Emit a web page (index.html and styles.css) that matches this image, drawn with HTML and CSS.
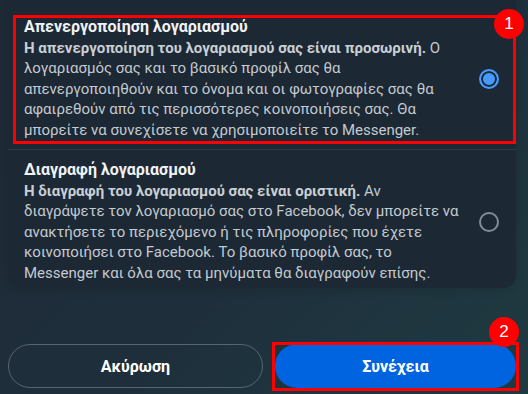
FILE: index.html
```html
<!DOCTYPE html>
<html lang="el">
<head>
  <meta charset="UTF-8">
  <title>Απενεργοποίηση ή διαγραφή</title>
  <link rel="stylesheet" href="styles.css">
</head>
<body>
  <div class="page">
    <div class="card">
      <div class="option selected">
        <div class="option-text">
          <div class="option-title">Απενεργοποίηση λογαριασμού</div>
          <div class="option-desc"><b>Η απενεργοποίηση του λογαριασμού σας είναι προσωρινή.</b> Ο λογαριασμός σας και το βασικό προφίλ σας θα απενεργοποιηθούν και το όνομα και οι φωτογραφίες σας θα αφαιρεθούν από τις περισσότερες κοινοποιήσεις σας. Θα μπορείτε να συνεχίσετε να χρησιμοποιείτε το Messenger.</div>
        </div>
        <span class="radio on"></span>
        <div class="mark mark-1"><span class="badge">1</span></div>
      </div>
      <div class="option">
        <div class="option-text">
          <div class="option-title">Διαγραφή λογαριασμού</div>
          <div class="option-desc"><b>Η διαγραφή του λογαριασμού σας είναι οριστική.</b> Αν διαγράψετε τον λογαριασμό σας στο Facebook, δεν μπορείτε να ανακτήσετε το περιεχόμενο ή τις πληροφορίες που έχετε κοινοποιήσει στο Facebook. Το βασικό προφίλ σας, το Messenger και όλα σας τα μηνύματα θα διαγραφούν επίσης.</div>
        </div>
        <span class="radio"></span>
      </div>
    </div>
    <div class="actions">
      <button class="btn btn-cancel">Ακύρωση</button>
      <div class="btn-wrap">
        <button class="btn btn-primary">Συνέχεια</button>
        <div class="mark mark-2"><span class="badge">2</span></div>
      </div>
    </div>
  </div>
</body>
</html>
```

FILE: styles.css
```css
html, body { margin: 0; height: 100%; }
body { font-family: Roboto, 'Noto Sans', Arial, sans-serif; background: linear-gradient(135deg, #1e2a36 0%, #1e2f3b 55%, #1f3b42 100%); color: #e4e6eb; overflow: hidden;}
.page { padding: 0 12px 0 8px; display: flex; flex-direction: column; height: 394px; box-sizing: border-box;}
.card { background: #1c2833; border-radius: 0 0 14px 14px; padding-top: 7px; box-shadow: 0 2px 10px rgba(0,0,0,0.12);}
.option { position: relative; display: flex; align-items: center; gap: 8px; padding: 10px 17px 9px 16px;}
.option + .option { border-top: 1px solid #2e3b47; padding-bottom: 5px;}
.option-text { flex: 1; max-width: 440px;}
.option-title { font-size: 16px; font-weight: 700; line-height: 20.5px; color: #f0f2f5;}
.option-desc { font-size: 15px; line-height: 20.5px; color: #c4cad1;}
.option-desc b { font-weight: 700; color: #c9cfd5;}
.radio { width: 16px; height: 16px; margin-left: auto; border-radius: 50%; border: 2px solid #7f8e9b; flex: none; box-sizing: content-box;}
.radio.on { border-color: #4599ff; background: #4599ff; box-shadow: inset 0 0 0 2px #1c2833;}
.mark { position: absolute; border: 3px solid #ff0000; pointer-events: none;}
.mark-1 { left: 5px; right: 0; top: 8px; bottom: 5px;}
.badge { position: absolute; width: 30px; height: 30px; border-radius: 50%; background: #ff0000; color: #fff; font-size: 17px; line-height: 30px; text-align: center; font-family: 'Liberation Sans', Arial, sans-serif;}
.mark-1 .badge { right: -11px; top: -9px;}
.actions { margin-top: auto; margin-bottom: 6px; display: flex; gap: 12px;}
.btn { font-family: inherit; font-size: 16px; font-weight: 700; color: #fff; height: 44px; border-radius: 22px; cursor: pointer;}
.btn-cancel { flex: 1; background: transparent; border: 1px solid #56656f;}
.btn-wrap { flex: 1; position: relative; display: flex;}
.btn-primary { flex: 1; background: #0064e0; border: none;}
.mark-2 { left: -3px; right: -3px; top: -2px; bottom: -3px;}
.mark-2 .badge { right: -3px; top: -28px;}
```
